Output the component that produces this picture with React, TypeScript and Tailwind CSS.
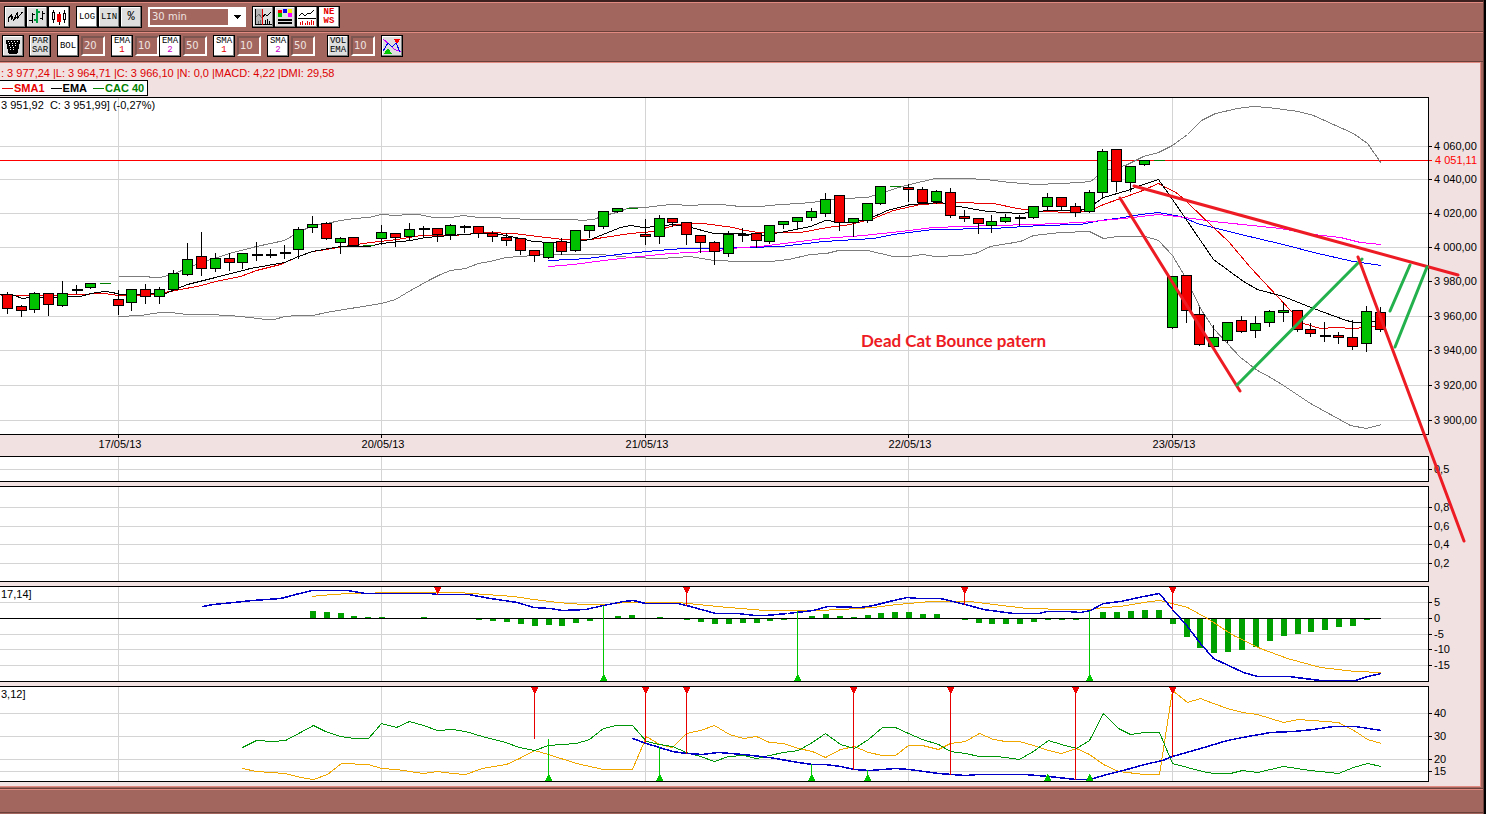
import React from "react";

type Candle = [high: number, top: number, bottom: number, low: number, kind: string];

interface PanelProps {
  top: number;
  height: number;
  grid: number[];
  labels?: string[];
  title?: string;
  children?: React.ReactNode;
}

interface ToolButtonProps {
  label: string;
  active?: boolean;
  children: React.ReactNode;
}

const PLOT_WIDTH = 1428;
const BAR_STEP = 13.87;
const FIRST_DAY = 118;
const FIRST_BAR = -8;

const DAYS = [
  { x: 118, label: "17/05/13" },
  { x: 381, label: "20/05/13" },
  { x: 645, label: "21/05/13" },
  { x: 908, label: "22/05/13" },
  { x: 1172, label: "23/05/13" },
];

const barX = (index: number) => Math.floor(FIRST_DAY + index * BAR_STEP + 0.1);

// g = up, r = down, d = doji, f = flat
const CANDLES: Candle[] = [
  [291, 294, 308, 312, "r"], [304, 306, 310, 315, "r"], [291, 293, 309, 311, "g"],
  [293, 293, 304, 314, "r"], [280, 293, 305, 305, "g"], [284, 289, 289, 292, "d"],
  [283, 283, 287, 287, "g"], [283, 283, 283, 283, "f"], [289, 299, 305, 313, "r"],
  [288, 289, 302, 309, "g"], [283, 289, 296, 302, "r"], [286, 289, 296, 302, "g"],
  [269, 273, 289, 289, "g"], [242, 259, 274, 274, "g"], [231, 256, 268, 274, "r"],
  [252, 258, 268, 270, "g"], [252, 258, 262, 269, "r"], [253, 253, 262, 267, "g"],
  [241, 254, 254, 259, "d"], [248, 254, 254, 256, "d"], [244, 252, 252, 257, "d"],
  [226, 229, 249, 257, "g"], [215, 224, 227, 231, "g"], [221, 223, 238, 238, "r"],
  [236, 238, 242, 252, "g"], [237, 237, 245, 245, "r"], [245, 245, 245, 245, "f"],
  [224, 232, 238, 243, "g"], [233, 233, 237, 245, "r"], [222, 229, 236, 239, "g"],
  [225, 228, 228, 236, "d"], [228, 228, 234, 240, "r"], [223, 225, 234, 238, "g"],
  [224, 226, 226, 231, "d"], [225, 226, 233, 236, "r"], [230, 233, 236, 240, "r"],
  [232, 237, 240, 244, "r"], [238, 238, 250, 253, "r"], [249, 250, 255, 260, "r"],
  [242, 242, 257, 257, "g"], [237, 241, 251, 253, "r"], [230, 230, 250, 250, "g"],
  [225, 225, 230, 236, "g"], [211, 211, 226, 227, "g"], [208, 208, 211, 211, "g"],
  [208, 208, 208, 208, "f"], [218, 234, 236, 243, "r"], [214, 218, 236, 242, "g"],
  [217, 218, 222, 225, "r"], [222, 222, 234, 243, "r"], [235, 235, 242, 251, "r"],
  [240, 242, 251, 263, "r"], [230, 234, 253, 255, "g"], [227, 234, 234, 240, "d"],
  [232, 233, 240, 246, "r"], [224, 225, 241, 242, "g"], [220, 221, 224, 227, "g"],
  [217, 217, 221, 228, "g"], [207, 211, 217, 219, "g"], [192, 199, 213, 215, "g"],
  [194, 195, 222, 229, "r"], [217, 218, 222, 235, "g"], [203, 203, 220, 221, "g"],
  [186, 186, 203, 203, "g"], [186, 186, 186, 186, "f"], [183, 187, 189, 200, "r"],
  [186, 189, 202, 202, "r"], [189, 191, 201, 202, "g"], [187, 192, 215, 216, "r"],
  [209, 216, 218, 220, "r"], [217, 218, 223, 232, "r"], [214, 221, 225, 231, "g"],
  [213, 217, 221, 221, "g"], [214, 217, 217, 224, "d"], [205, 206, 217, 217, "g"],
  [192, 197, 206, 208, "g"], [196, 197, 206, 209, "r"], [202, 206, 212, 215, "r"],
  [189, 192, 211, 211, "g"], [148, 151, 192, 196, "g"], [149, 149, 181, 190, "r"],
  [165, 166, 182, 190, "g"], [160, 160, 164, 164, "g"], [160, 160, 160, 160, "f"],
  [276, 276, 327, 327, "g"], [275, 275, 310, 321, "r"], [306, 314, 344, 344, "r"],
  [324, 337, 346, 346, "g"], [322, 322, 340, 341, "g"], [315, 320, 331, 331, "r"],
  [315, 323, 330, 336, "g"], [309, 311, 322, 325, "g"], [301, 310, 312, 320, "g"],
  [310, 310, 329, 330, "r"], [322, 329, 333, 335, "r"], [321, 335, 335, 340, "d"],
  [331, 335, 337, 342, "r"], [319, 337, 346, 348, "r"], [305, 311, 343, 350, "g"],
  [306, 312, 329, 330, "r"],
];

const PRICE_LINES = [
  {
    color: "#7c7c7c",
    points:
      "118,276 146,276 152,277 160,277 174,273 201,262 229,253 256,246 284,240 298,232 312,225 326,223 340,220 354,218 368,217 381,214 395,215 409,214 418,214 433,217 450,217 463,215 478,217 495,217 505,218 533,219 575,219 580,220 593,219 604,215 616,212 630,207 645,207 660,205 672,204 690,205 705,204 720,204 740,206 760,206 780,204 800,203 820,201 842,198 867,197 880,193 895,188 909,184 935,178 965,178 985,179 1010,182 1035,184 1060,183 1080,182 1090,181 1103,171 1112,168 1125,165 1143,156 1158,152 1172,145 1187,134 1201,120 1215,113 1237,108 1253,106 1268,107 1298,111 1313,115 1353,133 1367,143 1381,163",
  },
  {
    color: "#7c7c7c",
    points:
      "118,316 140,315 160,312 170,312 187,314 208,314 229,315 250,317 265,319 274,319 284,316 298,315 312,315 326,312 350,308 381,303 395,299 410,290 430,279 440,274 450,270 465,268 478,263 490,261 505,257 520,256 545,254 600,254 630,257 660,258 690,256 713,260 742,261 770,261 788,259 810,254 826,253 838,250 867,250 880,253 893,256 908,256 922,254 935,256 960,255 975,253 990,246 1020,241 1033,235 1060,232 1089,231 1103,238 1117,236 1145,236 1158,240 1172,255 1185,277 1200,308 1213,328 1240,357 1257,370 1270,377 1283,385 1310,403 1330,414 1350,425 1366,428 1381,424",
  },
  {
    color: "#0000ff",
    points:
      "548,260 570,259 587,258 617,254 657,250 683,248 717,248 733,247 748,247 780,246 823,241 873,238 893,234 933,229 993,228 1040,225 1080,224 1100,220 1123,217 1140,214 1158,212 1180,216 1197,223 1220,229 1253,237 1287,245 1313,252 1353,261 1381,265",
  },
  {
    color: "#ff00ff",
    points:
      "548,266 573,264 603,260 630,257 670,253 707,251 727,249 740,247 760,246 823,238 863,235 900,231 933,227 993,225 1033,224 1080,222 1123,218 1158,214 1177,216 1213,221 1280,228 1313,234 1340,237 1360,242 1381,244",
  },
  {
    color: "#e60000",
    points:
      "0,295 60,295 75,294 104,293 118,295 136,295 150,294 170,291 201,285 215,281 240,276 256,270 280,264 298,256 312,251 326,249 350,245 370,242 397,239 420,235 453,235 487,232 513,233 537,236 563,239 590,239 630,233 653,231 677,224 703,223 733,227 740,229 757,232 800,232 827,227 850,224 873,218 893,210 920,204 953,202 993,203 1017,208 1037,211 1077,212 1090,210 1103,204 1140,191 1158,183 1177,193 1187,202 1213,227 1228,241 1250,267 1290,310 1303,323 1320,328 1335,327 1353,328 1375,326",
  },
  {
    color: "#000000",
    points:
      "0,294 14,295 22,298 30,297 48,297 70,296 80,296 90,293 104,291 112,292 120,294 165,293 187,284 215,277 250,268 284,262 298,256 312,251 340,246 368,246 381,243 410,240 425,237 450,235 478,233 500,234 520,238 533,241 550,242 570,242 590,239 600,235 620,227 630,225 643,227 657,226 672,224 687,226 713,233 740,233 760,235 780,232 810,226 825,220 847,222 867,219 887,210 910,204 940,202 953,205 987,211 1020,213 1047,210 1080,210 1093,204 1103,197 1127,190 1143,184 1158,179 1172,199 1183,215 1200,240 1213,259 1243,281 1257,289 1283,296 1313,308 1343,319 1353,322 1381,321",
  },
];

const MACD_LINES = [
  {
    color: "#f0a800",
    width: 1,
    points:
      "312,596 320,595 347,593 402,592 458,592 485,594 513,596 533,599 557,602 583,604 605,604 625,602 678,602 717,606 740,608 765,610 817,610 840,609 873,607 897,604 930,601 970,601 993,604 1027,608 1067,609 1090,609 1103,607 1120,606 1143,602 1159,600 1172,603 1187,607 1207,618 1233,635 1260,648 1287,658 1320,667 1355,671 1381,672",
  },
  {
    color: "#0000c8",
    width: 1.5,
    points:
      "202,606 213,604 233,602 252,600 280,598 288,596 295,594 312,590 347,590 365,593 430,593 437,594 468,594 490,598 517,602 533,607 550,608 562,610 585,609 603,605 623,601 633,600 645,603 677,603 690,606 715,613 737,613 755,615 765,615 787,613 813,610 827,606 860,607 873,605 893,600 907,597 918,598 940,598 965,604 983,609 1013,613 1038,613 1047,611 1067,611 1080,612 1090,610 1103,603 1120,601 1143,596 1159,593 1172,609 1187,626 1200,643 1213,658 1243,672 1257,676 1288,676 1320,680 1355,680 1367,676 1381,673",
  },
];

// histogram offsets from the zero line, keyed by bar index
const MACD_BARS: [number, number][] = [
  [14, 7], [15, 6], [16, 5], [17, 2], [18, 1], [19, 1], [22, 1],
  [26, -1], [27, -2], [28, -3], [29, -5], [30, -7], [31, -6], [32, -7], [33, -4], [34, -2],
  [36, 2], [37, 3], [39, 1], [41, -1], [42, -3], [43, -5], [44, -5], [45, -4], [46, -4],
  [47, -2], [48, -1], [50, 2], [51, 4], [52, 2], [53, 1], [54, 3], [55, 5], [56, 6], [57, 6],
  [58, 4], [59, 4], [61, -1], [62, -4], [63, -5], [64, -5], [65, -5], [66, -3], [67, -1],
  [68, -1], [69, -1], [71, 6], [72, 6], [73, 7], [74, 8], [75, 8], [76, -5], [77, -18],
  [78, -29], [79, -34], [80, -33], [81, -31], [82, -28], [83, -22], [84, -17], [85, -15],
  [86, -13], [87, -11], [88, -8], [89, -7], [90, -1],
];

const DMI_LINES = [
  {
    color: "#f0a800",
    width: 1,
    points:
      "242,768 256,771 285,773 300,777 313,779 327,774 341,763 368,764 381,768 396,769 423,773 437,771 452,773 465,774 482,768 506,764 519,758 534,750 548,754 576,763 603,769 632,769 646,736 659,744 672,747 686,733 700,730 714,725 729,734 743,738 756,736 769,742 783,743 798,748 812,751 825,757 840,749 854,746 868,752 882,755 895,755 908,745 922,745 938,749 950,743 965,741 979,733 993,739 1005,741 1019,741 1033,745 1048,750 1061,753 1076,748 1089,754 1103,764 1118,771 1144,774 1159,774 1172,690 1187,702 1200,698 1213,703 1227,708 1242,712 1257,714 1283,722 1298,719 1338,722 1355,731 1367,739 1381,743",
  },
  {
    color: "#00960a",
    width: 1,
    points:
      "242,747 256,740 272,741 285,740 300,732 313,725 325,731 340,736 354,738 368,738 375,730 381,723 396,727 409,721 423,725 437,730 452,729 465,731 482,736 505,742 519,747 534,750 548,745 576,743 589,739 603,728 616,725 632,725 646,741 659,744 672,746 686,752 700,756 714,761 728,756 743,755 756,758 769,755 783,752 798,750 812,742 825,733 840,744 854,748 868,739 882,727 895,727 908,733 922,739 938,744 950,751 965,753 979,756 997,756 1019,759 1033,751 1048,740 1061,744 1076,748 1089,740 1103,713 1118,728 1130,734 1144,732 1159,732 1172,763 1187,767 1202,771 1213,773 1230,773 1242,770 1257,772 1283,766 1310,770 1338,773 1353,767 1367,763 1381,766",
  },
  {
    color: "#0000c8",
    width: 1.5,
    points:
      "632,738 646,743 659,747 672,751 686,753 702,754 718,752 743,754 769,757 798,762 812,764 825,764 840,766 854,769 869,770 895,768 909,769 938,773 965,775 978,774 1024,774 1048,776 1076,779 1089,779 1103,775 1130,768 1144,764 1162,760 1172,756 1200,748 1227,740 1242,737 1270,732 1293,731 1313,729 1333,726 1355,726 1381,730",
  },
];

const SKETCH_LINES = [
  { color: "#ed1c24", points: "1120,198 1240,391" },
  { color: "#ed1c24", points: "1134,186 1458,275" },
  { color: "#22b14c", points: "1237,385 1362,259" },
  { color: "#22b14c", points: "1390,311 1410,265" },
  { color: "#22b14c", points: "1395,347 1427,267" },
  { color: "#ed1c24", points: "1358,257 1464,541" },
];

const Panel: React.FC<PanelProps> = ({ top, height, grid, labels = [], title, children }) => (
  <div className="flex">
    <div className="relative min-w-0 flex-1 border-y border-r border-black bg-white">
      <svg
        className="block w-full"
        height={height}
        viewBox={`0 ${top} ${PLOT_WIDTH} ${height}`}
        preserveAspectRatio="none"
        shapeRendering="crispEdges"
        fill="none"
      >
        <g transform="translate(0.5 0.5)">
          {DAYS.map((day) => (
            <path key={day.x} d={`M${day.x} ${top - 1}v${height + 2}`} stroke="#d4d4d4" />
          ))}
          {grid.map((y) => (
            <path key={y} d={`M-1 ${y}h1430`} stroke="#d4d4d4" />
          ))}
          {children}
        </g>
      </svg>
      {title && <h2 className="absolute left-px top-0 text-[11px] leading-[14px]">{title}</h2>}
    </div>
    <svg className="w-[51px] shrink-0 overflow-visible" height={height + 2} shapeRendering="crispEdges">
      {labels.map((label, i) => (
        <g key={label}>
          <path d={`M0 ${grid[i] - top + 1.5}h3`} stroke="#000" />
          <text x="5" y={grid[i] - top + 5} className="text-[11px]">
            {label}
          </text>
        </g>
      ))}
      {top === 98 && (
        <g>
          <path d="M0 63.5h3" stroke="#f00" />
          <text x="6" y="67" fill="#f00" className="text-[11px]">
            4 051,11
          </text>
        </g>
      )}
    </svg>
  </div>
);

const Candles = () => (
  <g>
    {CANDLES.map(([high, top, bottom, low, kind], i) => {
      const x = barX(i + FIRST_BAR);
      if (kind === "f") {
        return <path key={i} d={`M${x - 5} ${top}h11`} stroke="#007d00" />;
      }
      return (
        <g key={i} stroke="#000">
          <path d={`M${x} ${high}V${low + 1}`} />
          {kind === "d" ? (
            <path d={`M${x - 5} ${top}h11`} strokeWidth="2" />
          ) : (
            <rect
              x={x - 5}
              y={top}
              width="10"
              height={bottom - top}
              fill={kind === "g" ? "#00c000" : "#f40000"}
            />
          )}
        </g>
      );
    })}
  </g>
);

const SellSignal: React.FC<{ x: number; top: number; to: number }> = ({ x, top, to }) => (
  <g>
    <path d={`M${x} ${top}V${to}`} stroke="#e60000" />
    <path d={`M${x - 4} ${top - 1}h8l-4 8z`} fill="#f00000" />
  </g>
);

const BuySignal: React.FC<{ x: number; bottom: number; from: number }> = ({ x, bottom, from }) => (
  <g>
    <path d={`M${x} ${bottom}V${from}`} stroke="#00c800" />
    <path d={`M${x - 4} ${bottom}h8l-4 -8z`} fill="#00c800" />
  </g>
);

const Lines: React.FC<{ lines: { color: string; width?: number; points: string }[] }> = ({ lines }) => (
  <g>
    {lines.map((line, i) => (
      <polyline key={i} points={line.points} stroke={line.color} strokeWidth={line.width ?? 1} />
    ))}
  </g>
);

const ToolButton: React.FC<ToolButtonProps> = ({ label, active, children }) => (
  <button
    type="button"
    aria-label={label}
    className={`flex h-[22px] w-[22px] shrink-0 flex-col items-center justify-center border border-black font-['Liberation_Mono'] text-[9px] leading-[9px] shadow-[inset_-1px_-1px_0_#808080,inset_1px_1px_0_#fff] ${
      active ? "bg-white" : "bg-[#dedede]"
    }`}
  >
    {children}
  </button>
);

const PeriodInput: React.FC<{ label: string; value: string }> = ({ label, value }) => (
  <input
    aria-label={label}
    defaultValue={value}
    className="mx-0.5 h-5 w-6 shrink-0 border-2 border-b-white border-l-[#7c5550] border-r-white border-t-[#7c5550] bg-[#a2665f] pb-0.5 pl-px font-['DejaVu_Sans'] text-[10px] leading-[14px] text-[#f0e4e0] outline-none"
  />
);

const Icon: React.FC<{ children: React.ReactNode }> = ({ children }) => (
  <svg width="18" height="18" viewBox="0 0 18 18" fill="none" shapeRendering="crispEdges" stroke="#000">
    {children}
  </svg>
);

const StyleToolbar = () => (
  <div className="flex h-[30px] items-center border-b border-[#6b3f3a] border-t border-t-[#e08a82] pl-1">
    <ToolButton label="Line">
      <Icon>
        <path d="M2.500 14v-4l3-3 2 5 4-8v6l5-6" />
        <path d="M5.500 7v5M7.500 12l3-3" />
      </Icon>
    </ToolButton>
    <ToolButton label="Bars">
      <Icon>
        <path d="M4.500 5v10M1 12.500h3M4 6.500h3M14.500 3v9M12 10.500h2M14 5.500h3" />
        <path d="M9 1v14M6 12h3M9 4h3" stroke="#00a040" strokeWidth="2" />
      </Icon>
    </ToolButton>
    <ToolButton label="Candles" active>
      <Icon>
        <path d="M3.500 2v13M14.500 2v13" />
        <path d="M2.500 4.500h2v7h-2zM13.500 5.500h2v6h-2z" fill="#fff" />
        <path d="M9 4v13" />
        <path d="M7.500 6.500h3v7h-3z" fill="#f00000" stroke="#f00000" />
      </Icon>
    </ToolButton>
    <div className="ml-1.5 flex">
      <ToolButton label="Logarithmic" active>LOG</ToolButton>
      <ToolButton label="Linear">LIN</ToolButton>
      <ToolButton label="Percent">
        <span className="text-xs leading-3">%</span>
      </ToolButton>
    </div>
    <div className="relative mx-1.5 h-5 w-[98px] shrink-0">
      <select
        aria-label="Interval"
        className="h-5 w-full appearance-none border-2 border-white bg-[#a2665f] pl-0.5 font-['DejaVu_Sans'] text-[10px] leading-4 text-[#f0e4e0] outline-none"
      >
        <option>30 min</option>
      </select>
      <span className="pointer-events-none absolute inset-y-0 right-0 flex w-[18px] items-center justify-center bg-white">
        <svg width="7" height="4" viewBox="0 0 7 4" shapeRendering="crispEdges">
          <path d="M0 0h7L4 4H3z" />
        </svg>
      </span>
    </div>
    <ToolButton label="Crosshair">
      <Icon>
        <path d="M1 1h7v16H1z" fill="#b4b4b4" stroke="none" />
        <path d="M1.500 1v15h16" />
        <path d="M2 9l3-3 3 4M4.500 16v-3M6.500 16v-4" stroke="#707070" />
        <path d="M9 9l2-3 2 2 4-4M11.500 16v-4M13.500 16v-5M15.500 16v-3" />
        <path d="M8.500 1v16" stroke="#e60000" />
      </Icon>
    </ToolButton>
    <ToolButton label="Colours">
      <Icon>
        <g stroke="none">
          <path d="M2 2h4v4H2z" fill="#f00" />
          <path d="M7 1h4v4H7z" fill="#0000f0" />
          <path d="M12 1h4v4h-4z" fill="#f0f000" />
          <path d="M2 5h4v4H2z" fill="#00c800" />
          <path d="M12 5h4v4h-4z" fill="#f0f" />
          <path d="M2 11h14v2H2zM2 14h14v2H2z" fill="#000" />
        </g>
      </Icon>
    </ToolButton>
    <ToolButton label="Volume" active>
      <Icon>
        <path d="M1 8l3-3 3 3 3-3 2 1 4-4M0 10.500h18" />
        <path d="M2.500 17v-3M4.500 17v-4M7.500 17v-2M9.500 17v-4M11.500 17v-3M13.500 17v-5M15.500 17v-4" stroke="#e60000" />
      </Icon>
    </ToolButton>
    <ToolButton label="News" active>
      <span className="font-bold text-[#e60000]">NE</span>
      <span className="font-bold text-[#e60000]">WS</span>
    </ToolButton>
  </div>
);

const IndicatorToolbar = () => (
  <div className="flex h-[30px] items-center border-b border-[#6b3f3a] border-t border-t-[#e08a82] pb-0.5 pl-0.5">
    <ToolButton label="Delete">
      <Icon>
        <path d="M2 3h14l-3 13H5z" fill="#000" />
        <path d="M4 4.500h10M5 8.500h8M6 12.500h6" stroke="#fff" strokeDasharray="1 2" />
        <path d="M5 6.500h9M6 10.500h6" stroke="#fff" strokeDasharray="1 2" />
      </Icon>
    </ToolButton>
    <div className="ml-[5px] mr-1.5">
      <ToolButton label="Parabolic SAR">
        <span>PAR</span>
        <span>SAR</span>
      </ToolButton>
    </div>
    <ToolButton label="Bollinger" active>BOL</ToolButton>
    <PeriodInput label="Bollinger period" value="20" />
    <div className="ml-1 flex items-center">
      <ToolButton label="EMA 1" active>
        <span>EMA</span>
        <span className="text-[#e60000]">1</span>
      </ToolButton>
      <PeriodInput label="EMA 1 period" value="10" />
    </div>
    <div className="-ml-0.5 flex items-center">
      <ToolButton label="EMA 2" active>
        <span>EMA</span>
        <span className="text-[#c800c8]">2</span>
      </ToolButton>
      <PeriodInput label="EMA 2 period" value="50" />
    </div>
    <div className="ml-1 flex items-center">
      <ToolButton label="SMA 1" active>
        <span>SMA</span>
        <span className="text-[#e60000]">1</span>
      </ToolButton>
      <PeriodInput label="SMA 1 period" value="10" />
    </div>
    <div className="ml-1 flex items-center">
      <ToolButton label="SMA 2" active>
        <span>SMA</span>
        <span className="text-[#c800c8]">2</span>
      </ToolButton>
      <PeriodInput label="SMA 2 period" value="50" />
    </div>
    <div className="ml-2.5 mr-1 flex items-center">
      <ToolButton label="Volume EMA">
        <span>VOL</span>
        <span>EMA</span>
      </ToolButton>
      <PeriodInput label="Volume EMA period" value="10" />
    </div>
    <ToolButton label="Signals">
      <Icon>
        <path d="M0 2l6 5 5 5 7 3" stroke="#c800ff" />
        <path d="M0 14l5-8 4 4 4-4 4 9" stroke="#0000f0" />
        <path d="M11 2h6l-3 4z" fill="#f00" stroke="#f00" />
        <path d="M2 16h6l-3-4z" fill="#00c800" stroke="#00c800" />
      </Icon>
    </ToolButton>
  </div>
);

const LegendItem: React.FC<{ color: string; children: React.ReactNode }> = ({ color, children }) => (
  <li className="flex items-center gap-px" style={{ color }}>
    <span className="h-px w-[11px] bg-current" />
    {children}
  </li>
);

const App = () => (
  <div className="flex min-h-screen bg-black pr-0.5 font-['Liberation_Sans',sans-serif] text-[11px] text-black">
    <div className="flex min-w-0 flex-1 flex-col border-r border-t-2 border-r-[#6b3f3a] border-t-[#3c2020] bg-[#a2665f]">
      <StyleToolbar />
      <IndicatorToolbar />
      <main className="relative mr-0.5 border-b border-r border-t border-[#e08a82] bg-[#f1e1e1] pb-1">
        <p className="mt-[3px] pl-px leading-[14px] text-[#dc0000]">
          : 3 977,24 |L: 3 964,71 |C: 3 966,10 |N: 0,0 |MACD: 4,22 |DMI: 29,58
        </p>
        <ul className="mb-px flex h-4 w-[148px] items-center gap-1.5 border-y border-r border-black bg-white pl-0.5 font-bold">
          <LegendItem color="#e60000">SMA1</LegendItem>
          <LegendItem color="#000">EMA</LegendItem>
          <LegendItem color="#008000">CAC 40</LegendItem>
        </ul>

        <Panel
          top={98}
          height={336}
          grid={[146, 179, 213, 247, 281, 316, 350, 385, 420]}
          labels={["4 060,00", "4 040,00", "4 020,00", "4 000,00", "3 980,00", "3 960,00", "3 940,00", "3 920,00", "3 900,00"]}
          title="3 951,92&nbsp; C: 3 951,99] (-0,27%)"
        >
          <path d="M-1 160h1430" stroke="#f00" />
          <Lines lines={PRICE_LINES} />
          <Candles />
        </Panel>

        <svg className="block h-[21px] w-full" viewBox="0 0 1480 21" shapeRendering="crispEdges">
          {DAYS.map((day) => (
            <g key={day.x}>
              <path d={`M${day.x + 0.5} 0v3`} stroke="#000" />
              <text x={day.x + 2} y="13" textAnchor="middle" className="text-[11px]">
                {day.label}
              </text>
            </g>
          ))}
        </svg>

        <div className="flex flex-col gap-1">
          <Panel top={457} height={24} grid={[469]} labels={["0,5"]} />
          <Panel top={487} height={94} grid={[507, 526, 544, 563]} labels={["0,8", "0,6", "0,4", "0,2"]} />
          <Panel
            top={587}
            height={94}
            grid={[602, 618, 634, 649, 665]}
            labels={["5", "0", "-5", "-10", "-15"]}
            title="17,14]"
          >
            <g fill="#00a000">
              {MACD_BARS.map(([index, value]) => (
                <rect
                  key={index}
                  x={barX(index) - 2.5}
                  y={value > 0 ? 617.5 - value : 618}
                  width="6"
                  height={Math.abs(value) + 0.5}
                />
              ))}
            </g>
            <path d="M-1 618h1381" stroke="#000" />
            <Lines lines={MACD_LINES} />
            <SellSignal x={437} top={587} to={594} />
            <SellSignal x={686} top={587} to={605} />
            <SellSignal x={964} top={587} to={604} />
            <SellSignal x={1172} top={587} to={609} />
            <BuySignal x={603} bottom={681} from={605} />
            <BuySignal x={797} bottom={681} from={610} />
            <BuySignal x={1089} bottom={681} from={610} />
          </Panel>
          <Panel
            top={687}
            height={94}
            grid={[713, 736, 759, 771]}
            labels={["40", "30", "20", "15"]}
            title="3,12]"
          >
            <Lines lines={DMI_LINES} />
            <SellSignal x={534} top={687} to={738} />
            <SellSignal x={645} top={687} to={742} />
            <SellSignal x={686} top={687} to={753} />
            <SellSignal x={853} top={687} to={769} />
            <SellSignal x={950} top={687} to={774} />
            <SellSignal x={1075} top={687} to={779} />
            <SellSignal x={1172} top={687} to={756} />
            <BuySignal x={548} bottom={781} from={738} />
            <BuySignal x={659} bottom={781} from={746} />
            <BuySignal x={811} bottom={781} from={763} />
            <BuySignal x={867} bottom={781} from={769} />
            <BuySignal x={1047} bottom={781} from={773} />
            <BuySignal x={1089} bottom={781} from={773} />
          </Panel>
        </div>

        <svg
          className="pointer-events-none absolute inset-0 h-full w-full"
          viewBox="0 63 1480 723"
          preserveAspectRatio="none"
          fill="none"
        >
          {SKETCH_LINES.map((line) => (
            <polyline
              key={line.points}
              points={line.points}
              stroke={line.color}
              strokeWidth="3"
              strokeLinecap="round"
            />
          ))}
        </svg>
        <p className="absolute left-[861px] top-[268px] font-['Lato'] text-[17px] leading-5 font-bold text-[#ed1c24]">
          Dead Cat Bounce patern
        </p>
      </main>
      <footer className="mb-px mt-px flex-1 border-y border-y-[#6b3f3a] shadow-[inset_0_1px_0_#e08a82]" />
    </div>
  </div>
);

export default App;
